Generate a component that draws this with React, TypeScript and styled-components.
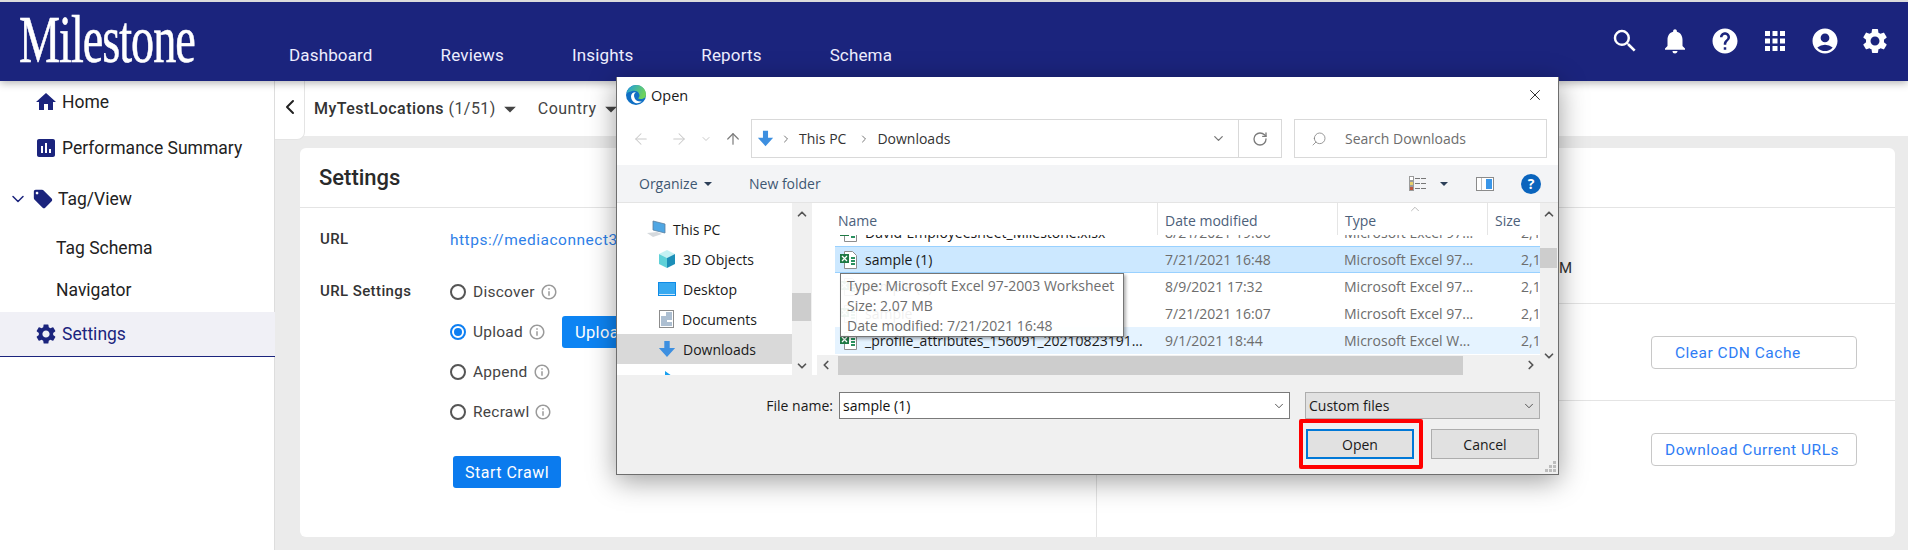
import styled, { createGlobalStyle } from 'styled-components';
import { ArrowLeft, ArrowRight, ArrowUp, ChevronDown, ChevronLeft, ChevronRight, ChevronUp, RotateCw, Search, X } from 'lucide-react';
import {
	MdAccountCircle,
	MdApps,
	MdArrowDropDown,
	MdAssessment,
	MdHelp,
	MdHome,
	MdInfoOutline,
	MdLocalOffer,
	MdNotifications,
	MdSearch,
	MdSettings
} from 'react-icons/md';

const GlobalStyle = createGlobalStyle`
	html, body {
		margin: 0;
		padding: 0;
		background: #fff;
	}
	* {
		box-sizing: border-box;
	}
`;

const Page = styled.div`
	position: relative;
	width: 1908px;
	height: 550px;
	overflow: hidden;
	border-top: 2px solid #dcdcdc;
	font-family: Roboto, 'Liberation Sans', sans-serif;
	color: #222;
	display: flex;
	flex-direction: column;
`;

const Header = styled.header`
	height: 79px;
	flex: none;
	background: #1b247d;
	display: flex;
	box-shadow: 0 2px 8px rgba(0, 0, 0, 0.3);
	position: relative;
	z-index: 2;
`;

const Logo = styled.div`
	width: 289px;
	flex: none;
	padding: 3px 0 0 19px;
	color: #fff;
	font-family: 'Liberation Serif', serif;
	font-size: 68px;
	line-height: 68px;
	span {
		display: inline-block;
		transform: scaleX(0.68);
		transform-origin: left center;
		letter-spacing: -1.5px;
		-webkit-text-stroke: 0.6px #fff;
	}
`;

const TopNav = styled.nav`
	display: flex;
	gap: 68px;
	padding-top: 42px;
`;

const TopLink = styled.a`
	color: #eef;
	font-size: 17px;
	line-height: 22px;
	letter-spacing: 0.15px;
`;

const HeaderIcons = styled.div`
	margin-left: auto;
	padding: 24px 18px 0 0;
	display: flex;
	gap: 20px;
	color: #fff;
	font-size: 30px;
	svg {
		display: block;
	}
`;

const Body = styled.div`
	flex: 1;
	display: flex;
	min-height: 0;
`;

const Sidebar = styled.aside`
	width: 275px;
	flex: none;
	border-right: 1px solid #ddd;
	display: grid;
	grid-template-rows: 42px 50px 52px 46px 38px 48px;
	align-content: start;
`;

const NavItem = styled.div<{ $indent: number; $active?: boolean }>`
	display: flex;
	align-items: center;
	gap: 4px;
	padding-left: ${(p) => p.$indent}px;
	font-size: 17.5px;
	color: ${(p) => (p.$active ? '#1b247d' : '#222')};
	svg {
		color: #1b247d;
		flex: none;
	}
`;

const ActiveNav = styled(NavItem)`
	margin-top: 3px;
	background: #f0f0f6;
	border-bottom: 1px solid #1b247d;
	margin-right: -1px;
`;

const Main = styled.main`
	flex: 1;
	display: flex;
	flex-direction: column;
	min-width: 0;
`;

const FilterBar = styled.div`
	height: 55px;
	flex: none;
	background: #fff;
	display: flex;
	align-items: flex-start;
`;

const BackTab = styled.div`
	width: 30px;
	height: 59px;
	flex: none;
	background: #fff;
	border-right: 1px solid #e4e4e4;
	border-bottom: 1px solid #e4e4e4;
	border-bottom-right-radius: 8px;
	display: flex;
	align-items: center;
	justify-content: center;
	padding-bottom: 6px;
	position: relative;
	z-index: 1;
	color: #222;
`;

const FilterGroup = styled.div`
	display: flex;
	align-items: center;
	height: 55px;
	margin-left: 9px;
	font-size: 16px;
	letter-spacing: 0.45px;
	color: #444;
	b {
		font-weight: 500;
		color: #333;
	}
	svg {
		flex: none;
	}
`;

const CountryLabel = styled.span`
	margin-left: 14px;
`;

const Content = styled.div`
	flex: 1;
	background: #ebebeb;
	padding: 12px 13px 13px 25px;
	min-height: 0;
`;

const Card = styled.section`
	height: 100%;
	background: #fff;
	border-radius: 6px;
	display: flex;
	flex-direction: column;
`;

const CardHeader = styled.div`
	height: 60px;
	flex: none;
	border-bottom: 1px solid #e4e4e4;
	padding-left: 19px;
	display: flex;
	align-items: center;
	font-size: 22px;
	font-weight: 500;
	color: #2a2a2a;
`;

const CardBody = styled.div`
	flex: 1;
	display: flex;
	min-height: 0;
`;

const LeftPane = styled.div`
	width: 797px;
	flex: none;
	border-right: 1px solid #e4e4e4;
	padding-left: 20px;
`;

const RightPane = styled.div`
	flex: 1;
	display: flex;
	flex-direction: column;
`;

const FieldRow = styled.div<{ $height?: number }>`
	display: grid;
	grid-template-columns: 130px 1fr;
	min-height: ${(p) => p.$height || 0}px;
	align-items: start;
`;

const FieldLabel = styled.div<{ $top: number }>`
	font-size: 15px;
	font-weight: 500;
	color: #333;
	letter-spacing: 0.4px;
	padding-top: ${(p) => p.$top}px;
`;

const UrlLink = styled.a`
	color: #2f7fe8;
	font-size: 15.5px;
	letter-spacing: 0.5px;
	padding-top: 23px;
	white-space: nowrap;
`;

const RadioRow = styled.label`
	height: 40px;
	display: flex;
	align-items: center;
	font-size: 15.5px;
	letter-spacing: 0.25px;
	color: #444;
	&:first-child {
		height: 41px;
	}
`;

const RadioDot = styled.span<{ $checked?: boolean }>`
	width: 16px;
	height: 16px;
	border-radius: 50%;
	margin-right: 7px;
	border: 2px solid ${(p) => (p.$checked ? '#0d7ff2' : '#555')};
	display: flex;
	align-items: center;
	justify-content: center;
	&::after {
		content: '';
		width: 8px;
		height: 8px;
		border-radius: 50%;
		background: ${(p) => (p.$checked ? '#0d7ff2' : 'transparent')};
	}
`;

const InfoMark = styled.span`
	display: flex;
	margin-left: 5px;
	color: #9a9a9a;
`;

const UploadButton = styled.button`
	margin-left: 16px;
	height: 32px;
	width: 130px;
	border: 0;
	border-radius: 3px;
	background: #0d84f3;
	color: #fff;
	font: 400 16.5px Roboto, sans-serif;
	letter-spacing: 0.3px;
	text-align: left;
	padding-left: 13px;
`;

const StartButton = styled.button`
	margin: 24px 0 0 3px;
	width: 108px;
	height: 32px;
	border: 0;
	border-radius: 3px;
	background: #0b7bee;
	color: #fff;
	font: 400 16px Roboto, sans-serif;
	letter-spacing: 0.5px;
`;

const RightSection = styled.div<{ $height?: number; $last?: boolean }>`
	height: ${(p) => (p.$height ? `${p.$height}px` : 'auto')};
	flex: ${(p) => (p.$last ? 1 : 'none')};
	border-bottom: ${(p) => (p.$last ? '0' : '1px solid #e4e4e4')};
	padding: 32px 38px 0 0;
	display: flex;
	justify-content: flex-end;
`;

const StrayText = styled.div`
	height: 96px;
	flex: none;
	border-bottom: 1px solid #e4e4e4;
	padding: 51px 0 0 462px;
	font-size: 15px;
	color: #333;
`;

const OutlineButton = styled.button<{ $inset: number }>`
	width: 206px;
	height: 33px;
	background: #fff;
	border: 1px solid #c8c8c8;
	border-radius: 4px;
	color: #2f7df5;
	font: 400 15.5px Roboto, sans-serif;
	letter-spacing: 0.5px;
	text-align: left;
	padding: 0 0 0 ${(p) => p.$inset}px;
	white-space: nowrap;
`;

/* windows file picker that floats over the page */
const Dialog = styled.div`
	position: absolute;
	left: 616px;
	top: 75px;
	width: 943px;
	height: 398px;
	z-index: 5;
	background: #fff;
	border: 1px solid #6e6e6e;
	border-top: 0;
	box-shadow: 0 6px 26px rgba(0, 0, 0, 0.38);
	display: flex;
	flex-direction: column;
	font-family: 'Open Sans', 'Noto Sans', sans-serif;
	font-size: 14px;
	color: #1a1a1a;
`;

const TitleBar = styled.div`
	height: 42px;
	flex: none;
	display: flex;
	align-items: center;
	padding: 0 14px 6px 9px;
	gap: 5px;
	font-size: 14.5px;
`;

const CloseBox = styled.span`
	margin-left: auto;
	display: flex;
`;

const AddressRow = styled.div`
	height: 46px;
	flex: none;
	display: flex;
	padding: 0 11px 7px 0;
`;

const NavArrows = styled.div`
	width: 134px;
	flex: none;
	display: flex;
	align-items: center;
	padding-left: 15px;
`;

const ArrowSlot = styled.span<{ $width: number; $color: string }>`
	width: ${(p) => p.$width}px;
	display: flex;
	color: ${(p) => p.$color};
`;

const AddressBox = styled.div`
	width: 531px;
	flex: none;
	border: 1px solid #d9d9d9;
	display: flex;
	align-items: center;
	padding-left: 5px;
	color: #333;
`;

const Crumb = styled.span`
	margin: 0 6px 0 7px;
`;

const CrumbChevron = styled.span`
	display: flex;
	color: #777;
	margin-left: 6px;
`;

const AddressTail = styled.div`
	margin-left: auto;
	height: 100%;
	display: flex;
	align-items: center;
	color: #777;
`;

const RefreshCell = styled.div`
	width: 43px;
	height: 100%;
	margin-left: 12px;
	border-left: 1px solid #d9d9d9;
	display: flex;
	align-items: center;
	justify-content: center;
	color: #7b7b7b;
`;

const SearchBox = styled.div`
	flex: 1;
	margin-left: 12px;
	border: 1px solid #d9d9d9;
	display: flex;
	align-items: center;
	padding-left: 16px;
	gap: 18px;
	color: #6d6d6d;
	svg {
		transform: scaleX(-1);
		color: #808080;
	}
`;

const CommandBar = styled.div`
	height: 38px;
	flex: none;
	background: #f3f4f6;
	border-bottom: 1px solid #e4e4e4;
	display: flex;
	align-items: center;
	padding: 0 17px 0 22px;
	color: #3e5772;
`;

const Organize = styled.span`
	display: flex;
	align-items: center;
	width: 110px;
`;

const CaretDown = styled.span<{ $wide?: boolean }>`
	width: 0;
	height: 0;
	margin: ${(p) => (p.$wide ? '0 28px 0 13px' : '0 0 0 6px')};
	border-left: 4px solid transparent;
	border-right: 4px solid transparent;
	border-top: 4px solid #2c3f58;
`;

const CommandIcons = styled.div`
	margin-left: auto;
	display: flex;
	align-items: center;
`;

const HelpBall = styled.span`
	width: 20px;
	height: 20px;
	border-radius: 50%;
	margin-left: 27px;
	background: #0a64bd;
	color: #fff;
	font-weight: 700;
	font-size: 14px;
	line-height: 20px;
	text-align: center;
`;

const Browser = styled.div`
	height: 172px;
	flex: none;
	display: flex;
	background: #fff;
`;

const NavPane = styled.div`
	width: 175px;
	flex: none;
	padding-top: 11px;
	overflow: hidden;
`;

const TreeRow = styled.div<{ $indent: number; $active?: boolean }>`
	height: 30px;
	flex: none;
	display: flex;
	align-items: center;
	gap: 7px;
	padding-left: ${(p) => p.$indent}px;
	background: ${(p) => (p.$active ? '#d9d9d9' : 'transparent')};
	svg {
		flex: none;
	}
`;

const ScrollTrack = styled.div`
	width: 20px;
	flex: none;
	background: #f0f0f0;
	display: flex;
	flex-direction: column;
	align-items: center;
	justify-content: space-between;
	position: relative;
	padding: 4px 0 2px;
	color: #555;
`;

const NavThumb = styled.div`
	position: absolute;
	left: 0;
	right: 1px;
	top: 90px;
	height: 28px;
	background: #cdcdcd;
`;

const ListPane = styled.div`
	width: 726px;
	margin-left: 2px;
	flex: none;
	display: flex;
	flex-direction: column;
	position: relative;
	min-width: 0;
`;

const ColumnsGrid = styled.div`
	display: grid;
	grid-template-columns: 322px 180px 150px 51px;
`;

const ListHead = styled(ColumnsGrid)`
	height: 32px;
	flex: none;
	margin-left: 21px;
	color: #4c607a;
	position: relative;
	z-index: 1;
	background: #fff;
`;

const HeadCell = styled.div<{ $plain?: boolean }>`
	padding: 8px 0 0 ${(p) => (p.$plain ? 3 : 7)}px;
	border-left: ${(p) => (p.$plain ? '0' : '1px solid #e5e5e5')};
	position: relative;
`;

const SortMark = styled.span`
	position: absolute;
	left: 70px;
	top: -1px;
	display: flex;
	color: #8a8a8a;
`;

const RowsViewport = styled.div`
	height: 120px;
	flex: none;
	margin-left: 21px;
	overflow: hidden;
`;

const FileRow = styled(ColumnsGrid)<{ $tone?: 'selected' | 'hover' }>`
	height: 27px;
	align-items: center;
	white-space: nowrap;
	background: ${(p) => (p.$tone === 'selected' ? '#cce8ff' : p.$tone === 'hover' ? '#e5f3ff' : 'transparent')};
	border-top: 1px solid ${(p) => (p.$tone === 'selected' ? '#99d1ff' : 'transparent')};
	border-bottom: 1px solid ${(p) => (p.$tone === 'selected' ? '#99d1ff' : 'transparent')};
	&:first-child {
		margin-top: -16px;
	}
`;

const NameCell = styled.div`
	display: flex;
	align-items: center;
	gap: 7px;
	padding-left: 5px;
	overflow: hidden;
	svg {
		flex: none;
	}
`;

const MetaCell = styled.div<{ $left: number }>`
	padding-left: ${(p) => p.$left}px;
	color: #6d6d6d;
	overflow: hidden;
`;

const HScroll = styled.div`
	height: 20px;
	flex: none;
	margin-left: 3px;
	background: #f0f0f0;
	display: flex;
	align-items: center;
	color: #555;
`;

const HThumb = styled.div`
	width: 625px;
	height: 19px;
	margin-left: 3px;
	background: #cdcdcd;
`;

const HArrow = styled.span<{ $right?: boolean }>`
	display: flex;
	width: 18px;
	justify-content: center;
	margin-left: ${(p) => (p.$right ? 'auto' : '0')};
`;

const FileTooltip = styled.div`
	position: absolute;
	left: 26px;
	top: 70px;
	width: 284px;
	height: 64px;
	padding: 2px 0 0 6px;
	z-index: 2;
	background: rgba(255, 255, 255, 0.93);
	border: 1px solid #767676;
	box-shadow: 2px 2px 3px rgba(0, 0, 0, 0.3);
	color: #6d6d6d;
	line-height: 20px;
	white-space: nowrap;
`;

const ListScroll = styled.div`
	flex: 1;
	width: 20px;
	margin-left: 0;
	background: #f0f0f0;
	display: flex;
	flex-direction: column;
	justify-content: space-between;
	align-items: center;
	position: relative;
	padding: 4px 0 12px;
	color: #555;
`;

const ListThumb = styled.div`
	position: absolute;
	left: 0;
	right: 1px;
	top: 45px;
	height: 20px;
	background: #cdcdcd;
`;

const Footer = styled.div`
	flex: 1;
	background: #f0f0f0;
	padding: 17px 19px 0 0;
	position: relative;
	display: flex;
	flex-direction: column;
	gap: 10px;
`;

const FileLine = styled.div`
	display: flex;
	align-items: center;
	justify-content: flex-end;
	margin-right: -1px;
`;

const FileLabel = styled.span`
	margin-right: 6px;
`;

const FileInput = styled.div`
	width: 451px;
	height: 27px;
	background: #fff;
	border: 1px solid #7a7a7a;
	padding: 0 3px;
	display: flex;
	align-items: center;
	justify-content: space-between;
	color: #111;
`;

const FileType = styled.div`
	width: 235px;
	height: 27px;
	margin-left: 15px;
	background: #e1e1e1;
	border: 1px solid #adadad;
	padding: 0 3px;
	display: flex;
	align-items: center;
	justify-content: space-between;
`;

const ButtonLine = styled.div`
	display: flex;
	justify-content: flex-end;
	gap: 17px;
`;

const WinButton = styled.div<{ $focused?: boolean }>`
	width: 108px;
	height: 30px;
	position: relative;
	background: #e1e1e1;
	border: ${(p) => (p.$focused ? '2px solid #0078d7' : '1px solid #adadad')};
	display: flex;
	align-items: center;
	justify-content: center;
`;

const RedHighlight = styled.span`
	position: absolute;
	top: -12px;
	left: -9px;
	right: -11px;
	bottom: -12px;
	border: 4px solid #f00;
	border-radius: 2px;
`;

const Grip = styled.span`
	position: absolute;
	right: 1px;
	bottom: 1px;
	display: flex;
`;

const EdgeIcon = () => (
	<svg width="20" height="20" viewBox="0 0 20 20">
		<defs>
			<linearGradient id="edgeTop" x1="0" y1="0" x2="1" y2="0.4">
				<stop offset="0" stopColor="#1b9de2" />
				<stop offset="1" stopColor="#6fd35c" />
			</linearGradient>
		</defs>
		<circle cx="10" cy="10" r="10" fill="#0f6fc4" />
		<path d="M0.5 8C2 3 6 0 10.5 0 16 0 20 4.5 20 9.5c0 3-2.5 4.5-5 4.5-1.5 0-2.5-.4-3-.8 1.800-1 2-3.200.8-5C11.500 6 8.500 5.300 5.500 6.200 3.300 6.800 1.500 7.500.5 8z" fill="url(#edgeTop)" />
		<path d="M5 11.500C5 8.500 7.500 7 9.800 7.300 7.800 8.500 7.500 11 8.800 13.500c1 2 3.500 3.500 7 3-2 1.700-4.500 2-6.500 1.500C7 17.300 5 14.500 5 11.500z" fill="#fff" />
	</svg>
);

const DownloadArrow = ({ size }: { size: number }) => (
	<svg width={size} height={size} viewBox="0 0 20 20">
		<path d="M7 1h6v8h6l-9 10-9-10h6z" fill="#3d8fe0" />
	</svg>
);

const PcIcon = () => (
	<svg width="20" height="18" viewBox="0 0 20 18">
		<path d="M7 1l12 3v9L7 10z" fill="#4fa6e3" stroke="#5a7f9e" strokeWidth="0.8" />
		<path d="M1 13l10-1 5 2-9 3z" fill="#d5d9dd" />
	</svg>
);

const CubeIcon = () => (
	<svg width="18" height="18" viewBox="0 0 18 18">
		<path d="M9 0l8 4-8 4-8-4z" fill="#c4f1f3" />
		<path d="M1 4l8 4v10l-8-4z" fill="#5fd1d8" />
		<path d="M17 4l-8 4v10l8-4z" fill="#1c8fb8" />
	</svg>
);

const DesktopIcon = () => (
	<svg width="18" height="14" viewBox="0 0 18 14">
		<rect width="18" height="14" fill="#0f8be6" />
		<rect x="1" y="1" width="16" height="11" fill="#37a9f0" />
		<rect x="1" y="12" width="16" height="1" fill="#cfe9fb" />
	</svg>
);

const DocIcon = () => (
	<svg width="16" height="18" viewBox="0 0 16 18">
		<rect x="0.5" y="0.500" width="14" height="17" fill="#fff" stroke="#8c8c8c" />
		<path d="M7 3h6M7 5h6M2 7h11M2 9h11M2 11h6M2 13h11M2 15h11" stroke="#5a7fa3" />
	</svg>
);

const MusicIcon = () => (
	<svg width="16" height="18" viewBox="0 0 16 18">
		<path d="M6 1l7 5-4 1v8a3 3 0 1 1-3-3z" fill="#18a0f0" />
	</svg>
);

const ExcelIcon = () => (
	<svg width="18" height="18" viewBox="0 0 18 18">
		<path d="M4.500 0.500h8l4 4v13h-12z" fill="#fff" stroke="#8d8d8d" />
		<rect x="0" y="3" width="9" height="9" fill="#1f7a45" />
		<path d="M2 5l5 5M7 5l-5 5" stroke="#fff" strokeWidth="1.300" />
		<path d="M11 7h4M11 10h4M11 13h4" stroke="#2a9160" strokeWidth="1.800" />
	</svg>
);

const ViewIcon = () => (
	<svg width="18" height="15" viewBox="0 0 18 15">
		<rect x="0.500" y="0.500" width="4" height="4" fill="#fff" stroke="#9b9b9b" />
		<rect x="0.500" y="5.500" width="4" height="4" fill="#e6d06a" stroke="#9b9b9b" />
		<rect x="0.500" y="10.500" width="4" height="4" fill="#c0563c" stroke="#9b9b9b" />
		<path d="M6 2.500h12M6 7.500h12M6 12.500h12" stroke="#777" strokeDasharray="5 1" />
	</svg>
);

const PaneIcon = () => (
	<svg width="18" height="14" viewBox="0 0 18 14">
		<rect x="0.500" y="0.500" width="17" height="13" fill="#fff" stroke="#8b8b8b" />
		<rect x="10" y="2" width="6" height="10" fill="#3a96e8" />
		<rect x="5" y="1" width="1" height="12" fill="#bdbdbd" />
	</svg>
);

const GripIcon = () => (
	<svg width="12" height="12" viewBox="0 0 12 12" fill="#bdbdbd">
		<rect x="8" y="0" width="3" height="3" />
		<rect x="4" y="4" width="3" height="3" />
		<rect x="8" y="4" width="3" height="3" />
		<rect x="0" y="8" width="3" height="3" />
		<rect x="4" y="8" width="3" height="3" />
		<rect x="8" y="8" width="3" height="3" />
	</svg>
);

const files = [
	{ name: 'David-Employeesheet_Milestone.xlsx', date: '8/21/2021 19:06', type: 'Microsoft Excel 97...' },
	{ name: 'sample (1)', date: '7/21/2021 16:48', type: 'Microsoft Excel 97...', tone: 'selected' as const },
	{ name: 'sample (2)', date: '8/9/2021 17:32', type: 'Microsoft Excel 97...' },
	{ name: 'sample', date: '7/21/2021 16:07', type: 'Microsoft Excel 97...' },
	{ name: '_profile_attributes_156091_20210823191...', date: '9/1/2021 18:44', type: 'Microsoft Excel W...', tone: 'hover' as const }
];

const infoOptions = ['Discover', 'Upload', 'Append', 'Recrawl'];

function App() {
	return (
		<Page>
			<GlobalStyle />
			<Header>
				<Logo>
					<span>Milestone</span>
				</Logo>
				<TopNav>
					<TopLink>Dashboard</TopLink>
					<TopLink>Reviews</TopLink>
					<TopLink>Insights</TopLink>
					<TopLink>Reports</TopLink>
					<TopLink>Schema</TopLink>
				</TopNav>
				<HeaderIcons>
					<MdSearch />
					<MdNotifications />
					<MdHelp />
					<MdApps />
					<MdAccountCircle />
					<MdSettings />
				</HeaderIcons>
			</Header>
			<Body>
				<Sidebar>
					<NavItem $indent={34}>
						<MdHome size={24} />
						Home
					</NavItem>
					<NavItem $indent={34}>
						<MdAssessment size={24} />
						Performance Summary
					</NavItem>
					<NavItem $indent={8}>
						<ChevronDown size={20} strokeWidth={1.8} />
						<MdLocalOffer size={22} />
						Tag/View
					</NavItem>
					<NavItem $indent={56}>Tag Schema</NavItem>
					<NavItem $indent={56}>Navigator</NavItem>
					<ActiveNav $indent={34} $active>
						<MdSettings size={24} />
						Settings
					</ActiveNav>
				</Sidebar>
				<Main>
					<FilterBar>
						<BackTab>
							<ChevronLeft size={24} strokeWidth={2} />
						</BackTab>
						<FilterGroup>
							<b>MyTestLocations</b>&nbsp;(1/51)
							<MdArrowDropDown size={28} />
							<CountryLabel>Country</CountryLabel>
							<MdArrowDropDown size={28} />
						</FilterGroup>
					</FilterBar>
					<Content>
						<Card>
							<CardHeader>Settings</CardHeader>
							<CardBody>
								<LeftPane>
									<FieldRow $height={63}>
										<FieldLabel $top={22}>URL</FieldLabel>
										<UrlLink>https://mediaconnect360.milestoneinternet.com</UrlLink>
									</FieldRow>
									<FieldRow>
										<FieldLabel $top={11}>URL Settings</FieldLabel>
										<div>
											{infoOptions.map((option) => (
												<RadioRow key={option}>
													<RadioDot $checked={option === 'Upload'} />
													{option}
													<InfoMark>
														<MdInfoOutline size={18} />
													</InfoMark>
													{option === 'Upload' && <UploadButton>Upload File</UploadButton>}
												</RadioRow>
											))}
											<StartButton>Start Crawl</StartButton>
										</div>
									</FieldRow>
								</LeftPane>
								<RightPane>
									<StrayText>M</StrayText>
									<RightSection $height={97}>
										<OutlineButton $inset={23}>Clear CDN Cache</OutlineButton>
									</RightSection>
									<RightSection $last>
										<OutlineButton $inset={13}>Download Current URLs</OutlineButton>
									</RightSection>
								</RightPane>
							</CardBody>
						</Card>
					</Content>
				</Main>
			</Body>
			<Dialog>
				<TitleBar>
					<EdgeIcon />
					Open
					<CloseBox>
						<X size={18} strokeWidth={1.2} />
					</CloseBox>
				</TitleBar>
				<AddressRow>
					<NavArrows>
						<ArrowSlot $width={38} $color="#c9c9c9">
							<ArrowLeft size={18} strokeWidth={1.4} />
						</ArrowSlot>
						<ArrowSlot $width={30} $color="#c9c9c9">
							<ArrowRight size={18} strokeWidth={1.4} />
						</ArrowSlot>
						<ArrowSlot $width={24} $color="#c9c9c9">
							<ChevronDown size={12} />
						</ArrowSlot>
						<ArrowSlot $width={18} $color="#7b7b7b">
							<ArrowUp size={18} strokeWidth={1.6} />
						</ArrowSlot>
					</NavArrows>
					<AddressBox>
						<DownloadArrow size={17} />
						<CrumbChevron>
							<ChevronRight size={12} />
						</CrumbChevron>
						<Crumb>This PC</Crumb>
						<CrumbChevron>
							<ChevronRight size={12} />
						</CrumbChevron>
						<Crumb>Downloads</Crumb>
						<AddressTail>
							<ChevronDown size={15} />
							<RefreshCell>
								<RotateCw size={16} />
							</RefreshCell>
						</AddressTail>
					</AddressBox>
					<SearchBox>
						<Search size={16} strokeWidth={1.2} />
						Search Downloads
					</SearchBox>
				</AddressRow>
				<CommandBar>
					<Organize>
						Organize
						<CaretDown />
					</Organize>
					New folder
					<CommandIcons>
						<ViewIcon />
						<CaretDown $wide />
						<PaneIcon />
						<HelpBall>?</HelpBall>
					</CommandIcons>
				</CommandBar>
				<Browser>
					<NavPane>
						<TreeRow $indent={29}>
							<PcIcon />
							This PC
						</TreeRow>
						<TreeRow $indent={41}>
							<CubeIcon />
							3D Objects
						</TreeRow>
						<TreeRow $indent={41}>
							<DesktopIcon />
							Desktop
						</TreeRow>
						<TreeRow $indent={42}>
							<DocIcon />
							Documents
						</TreeRow>
						<TreeRow $indent={41} $active>
							<DownloadArrow size={18} />
							Downloads
						</TreeRow>
						<TreeRow $indent={42}>
							<MusicIcon />
							Music
						</TreeRow>
					</NavPane>
					<ScrollTrack>
						<ChevronUp size={14} strokeWidth={3} />
						<NavThumb />
						<ChevronDown size={14} strokeWidth={3} />
					</ScrollTrack>
					<ListPane>
						<ListHead>
							<HeadCell $plain>Name</HeadCell>
							<HeadCell>Date modified</HeadCell>
							<HeadCell>
								<SortMark>
									<ChevronUp size={14} strokeWidth={1} />
								</SortMark>
								Type
							</HeadCell>
							<HeadCell>Size</HeadCell>
						</ListHead>
						<RowsViewport>
							{files.map((file) => (
								<FileRow key={file.name} $tone={file.tone}>
									<NameCell>
										<ExcelIcon />
										{file.name}
									</NameCell>
									<MetaCell $left={8}>{file.date}</MetaCell>
									<MetaCell $left={7}>{file.type}</MetaCell>
									<MetaCell $left={34}>2,123 KB</MetaCell>
								</FileRow>
							))}
						</RowsViewport>
						<HScroll>
							<HArrow>
								<ChevronLeft size={14} strokeWidth={3} />
							</HArrow>
							<HThumb />
							<HArrow $right>
								<ChevronRight size={14} strokeWidth={3} />
							</HArrow>
						</HScroll>
						<FileTooltip>
							Type: Microsoft Excel 97-2003 Worksheet
							<br />
							Size: 2.07 MB
							<br />
							Date modified: 7/21/2021 16:48
						</FileTooltip>
					</ListPane>
					<ListScroll>
						<ChevronUp size={14} strokeWidth={3} />
						<ListThumb />
						<ChevronDown size={14} strokeWidth={3} />
					</ListScroll>
				</Browser>
				<Footer>
					<FileLine>
						<FileLabel>File name:</FileLabel>
						<FileInput>
							sample (1)
							<ChevronDown size={14} strokeWidth={1.2} />
						</FileInput>
						<FileType>
							Custom files
							<ChevronDown size={14} strokeWidth={1.2} />
						</FileType>
					</FileLine>
					<ButtonLine>
						<WinButton $focused>
							Open
							<RedHighlight />
						</WinButton>
						<WinButton>Cancel</WinButton>
					</ButtonLine>
					<Grip>
						<GripIcon />
					</Grip>
				</Footer>
			</Dialog>
		</Page>
	);
}

export default App;
